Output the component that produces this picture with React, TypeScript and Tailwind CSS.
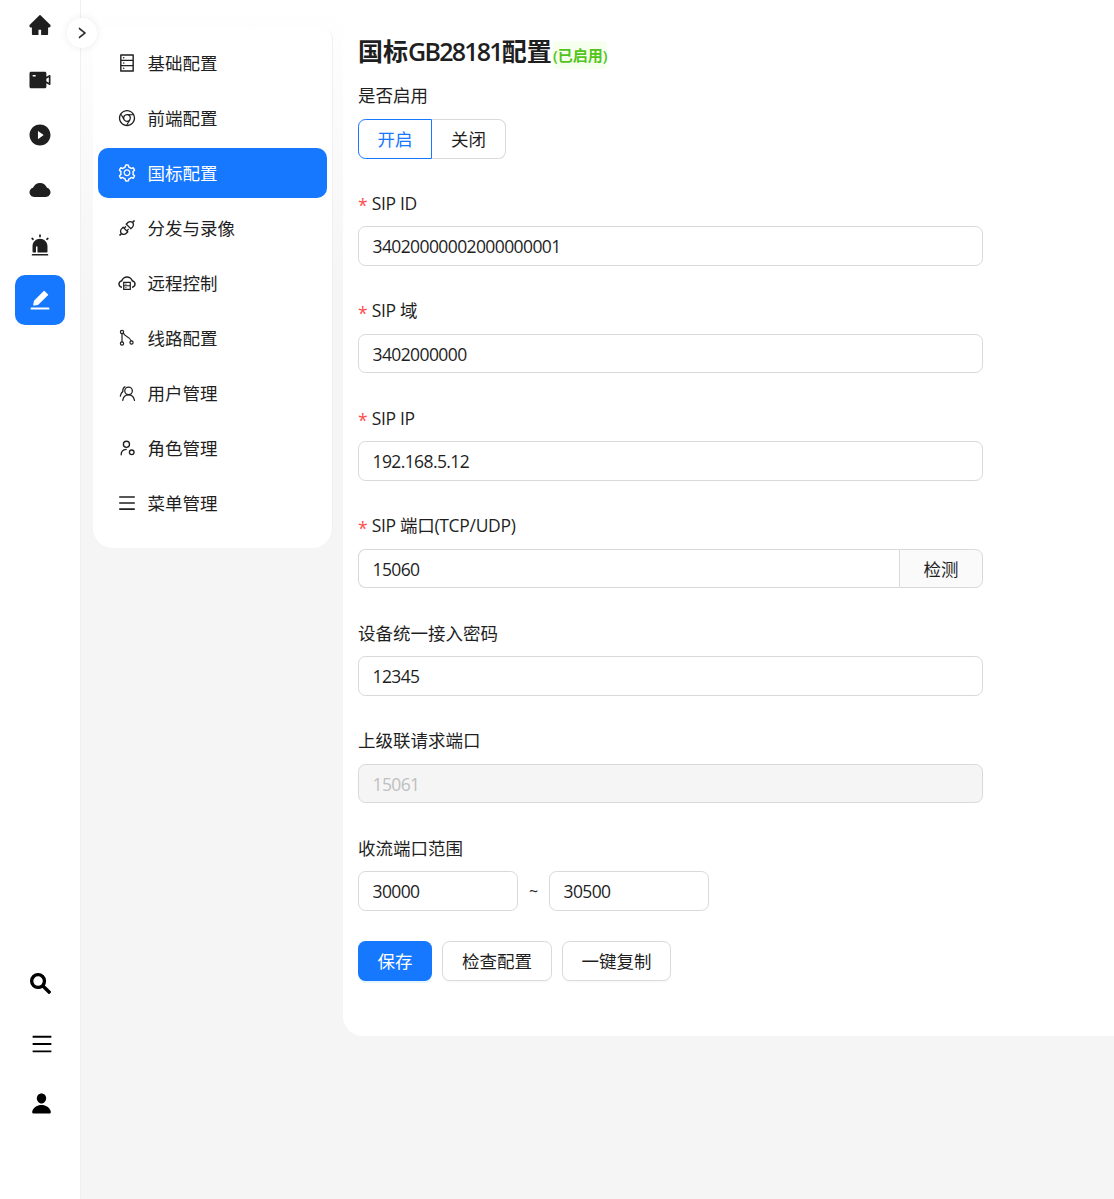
import type { ReactNode } from "react";
import {
  AiFillAlert,
  AiFillCloud,
  AiFillEdit,
  AiFillHome,
  AiFillPlayCircle,
  AiFillVideoCamera,
  AiOutlineApi,
  AiOutlineChrome,
  AiOutlineCloudServer,
  AiOutlineDatabase,
  AiOutlineMenu,
  AiOutlineRight,
  AiOutlineSearch,
  AiOutlineSetting,
} from "react-icons/ai";
import { IoPerson } from "react-icons/io5";

function BranchIcon() {
  return (
    <svg width="18" height="18" viewBox="0 0 18 18" fill="none" stroke="currentColor" strokeWidth="1.2" strokeLinecap="round">
      <circle cx="4" cy="3" r="1.6" />
      <circle cx="4" cy="14.5" r="1.6" />
      <circle cx="13.5" cy="13.5" r="1.6" />
      <path d="M4 4.6v8.3" />
      <path d="M5.4 3.8C6 8 12.4 7.4 13.1 11.9" />
    </svg>
  );
}

function UsersIcon() {
  return (
    <svg width="19" height="19" viewBox="0 0 18 18" fill="none" stroke="currentColor" strokeWidth="1.2" strokeLinecap="round">
      <circle cx="10" cy="6.5" r="3.6" />
      <path d="M4.5 15.5c.4-3 2.6-5.2 5.5-5.2s5 2.2 5.6 5.2" />
      <path d="M6.6 2.6C5 3.4 4.4 5 4.6 6.8c-1 1-2 2.6-2.4 4.6" />
    </svg>
  );
}

function RoleIcon() {
  return (
    <svg width="19" height="19" viewBox="0 0 18 18" fill="none" stroke="currentColor" strokeWidth="1.25" strokeLinecap="round">
      <circle cx="8" cy="5" r="2.9" />
      <path d="M3 15c0-3 1.8-5 4.8-5.2" />
      <circle cx="13" cy="12.6" r="2.2" />
    </svg>
  );
}

const railTop = [
  <AiFillHome key="home" size={24} />,
  <AiFillVideoCamera key="video" size={24} />,
  <AiFillPlayCircle key="play" size={24} />,
  <AiFillCloud key="cloud" size={24} />,
  <AiFillAlert key="alert" size={24} />,
];

const menu: { label: string; icon: ReactNode; active?: boolean }[] = [
  { label: "基础配置", icon: <AiOutlineDatabase size={20} /> },
  { label: "前端配置", icon: <AiOutlineChrome size={20} /> },
  { label: "国标配置", icon: <AiOutlineSetting size={20} />, active: true },
  { label: "分发与录像", icon: <AiOutlineApi size={20} /> },
  { label: "远程控制", icon: <AiOutlineCloudServer size={20} /> },
  { label: "线路配置", icon: <BranchIcon /> },
  { label: "用户管理", icon: <UsersIcon /> },
  { label: "角色管理", icon: <RoleIcon /> },
  { label: "菜单管理", icon: <AiOutlineMenu size={20} /> },
];

function Field({ label, required, children }: { label: string; required?: boolean; children: ReactNode }) {
  return (
    <div className="mb-[30px]">
      <div className="mb-[10px] flex h-[27.5px] items-center">
        {required && <span className="mr-[4px] pt-[5px] text-[17.5px] text-[#ff4d4f]">*</span>}
        <span className={required ? "tracking-[-0.3px]" : ""}>{label}</span>
      </div>
      <div className="h-10">{children}</div>
    </div>
  );
}

function TextInput({ value, disabled, className }: { value: string; disabled?: boolean; className?: string }) {
  return (
    <input
      readOnly
      disabled={disabled}
      value={value}
      className={`h-[39.5px] rounded-[7.5px] border border-[#d9d9d9] px-[13.5px] tracking-[-0.6px] outline-none ${
        disabled ? "bg-[#f5f5f5] text-[#bfbfbf]" : "bg-white text-[#1f1f1f]"
      } ${className ?? "w-[625px]"}`}
    />
  );
}

export default function App() {
  return (
    <div className="relative flex h-[1199px] overflow-hidden bg-gradient-to-b from-white to-[#f5f5f5] to-[300px] font-['Open_Sans','Noto_Sans_CJK_SC',sans-serif] text-[17.5px] text-[#1f1f1f]">
      <aside className="flex w-[81px] shrink-0 flex-col items-center border-r border-[#f0f0f0] bg-white">
        <div className="flex w-full flex-col items-center gap-[5px] pr-px">
          {railTop.map((icon, i) => (
            <div key={i} className="flex h-[50px] w-[50px] items-center justify-center text-[#1f1f1f]">
              {icon}
            </div>
          ))}
          <div className="flex h-[50px] w-[50px] items-center justify-center rounded-[10px] bg-[#1677ff] text-white">
            <AiFillEdit size={24} />
          </div>
        </div>
        <div className="mt-[628px] flex flex-col items-center text-black">
          <div className="flex h-[60px] items-center justify-center pl-px">
            <AiOutlineSearch size={25} strokeWidth={60} />
          </div>
          <div className="flex h-[61px] items-center justify-center pl-[4px]">
            <AiOutlineMenu size={24} />
          </div>
          <div className="flex h-[59px] items-center justify-center pl-[2px]">
            <IoPerson size={23} />
          </div>
        </div>
      </aside>

      {/* sits over the rail edge */}
      <button className="absolute left-[67px] top-[18px] flex h-[30px] w-[30px] items-center justify-center rounded-full bg-white shadow-[0_0_8px_rgba(0,0,0,0.08)]">
        <AiOutlineRight size={14} strokeWidth={40} />
      </button>

      <nav className="ml-3 mt-[30px] h-[518px] w-[240px] shrink-0 rounded-b-[20px] rounded-t-[8px] border-r border-[#f0f0f0] bg-white px-[5px] pt-2">
        <ul className="flex flex-col gap-[5px]">
          {menu.map((item) => (
            <li
              key={item.label}
              className={`flex h-[50px] items-center gap-[11.5px] rounded-[10px] pl-[20px] ${
                item.active ? "bg-[#1677ff] text-white" : "text-[#1f1f1f]"
              }`}
            >
              <span className="flex h-[18px] w-[18px] items-center justify-center [&>svg]:shrink-0">{item.icon}</span>
              <span>{item.label}</span>
            </li>
          ))}
        </ul>
      </nav>

      <main className="ml-[10px] h-[1036px] flex-1 rounded-bl-[20px] bg-white pl-[15px]">
        <div className="flex h-[81.4px] items-start pt-[33px]">
          <h1 className="text-[25px] font-semibold leading-[37.5px]">
            国标<span className="tracking-[-1.75px]">GB28181</span>配置
          </h1>
          <span className="ml-px mt-[8px] rounded-[4px] bg-[#f6ffed] text-[15px] font-semibold leading-[28px] text-[#52c41a]">
            (已启用)
          </span>
        </div>

        <Field label="是否启用">
          <div className="flex">
            <div className="flex h-10 w-[74px] items-center justify-center rounded-l-[7.5px] border border-[#1677ff] text-[#1677ff]">
              开启
            </div>
            <div className="flex h-10 w-[74px] items-center justify-center rounded-r-[7.5px] border border-l-0 border-[#d9d9d9]">
              关闭
            </div>
          </div>
        </Field>

        <Field label="SIP ID" required>
          <TextInput value="34020000002000000001" />
        </Field>
        <Field label="SIP 域" required>
          <TextInput value="3402000000" />
        </Field>
        <Field label="SIP IP" required>
          <TextInput value="192.168.5.12" />
        </Field>
        <Field label="SIP 端口(TCP/UDP)" required>
          <div className="flex w-[625px]">
            <TextInput value="15060" className="w-[541px] rounded-r-none border-r-0" />
            <div className="flex h-[39.5px] flex-1 items-center justify-center rounded-r-[7.5px] border border-[#d9d9d9] bg-[#fafafa]">
              检测
            </div>
          </div>
        </Field>
        <Field label="设备统一接入密码">
          <TextInput value="12345" />
        </Field>
        <Field label="上级联请求端口">
          <TextInput value="15061" disabled />
        </Field>
        <Field label="收流端口范围">
          <div className="flex items-center">
            <TextInput value="30000" className="w-[160px]" />
            <span className="w-[31px] text-center text-[16px]">~</span>
            <TextInput value="30500" className="w-[160px]" />
          </div>
        </Field>

        <div className="flex gap-[10px]">
          <button className="h-[39.5px] w-[74px] rounded-[7.5px] bg-[#1677ff] text-white shadow-[0_2px_0_rgba(5,145,255,0.1)]">保存</button>
          <button className="h-[39.5px] w-[110px] rounded-[7.5px] border border-[#d9d9d9] bg-white shadow-[0_2px_0_rgba(0,0,0,0.02)]">检查配置</button>
          <button className="h-[39.5px] w-[109px] rounded-[7.5px] border border-[#d9d9d9] bg-white shadow-[0_2px_0_rgba(0,0,0,0.02)]">一键复制</button>
        </div>
      </main>
    </div>
  );
}
